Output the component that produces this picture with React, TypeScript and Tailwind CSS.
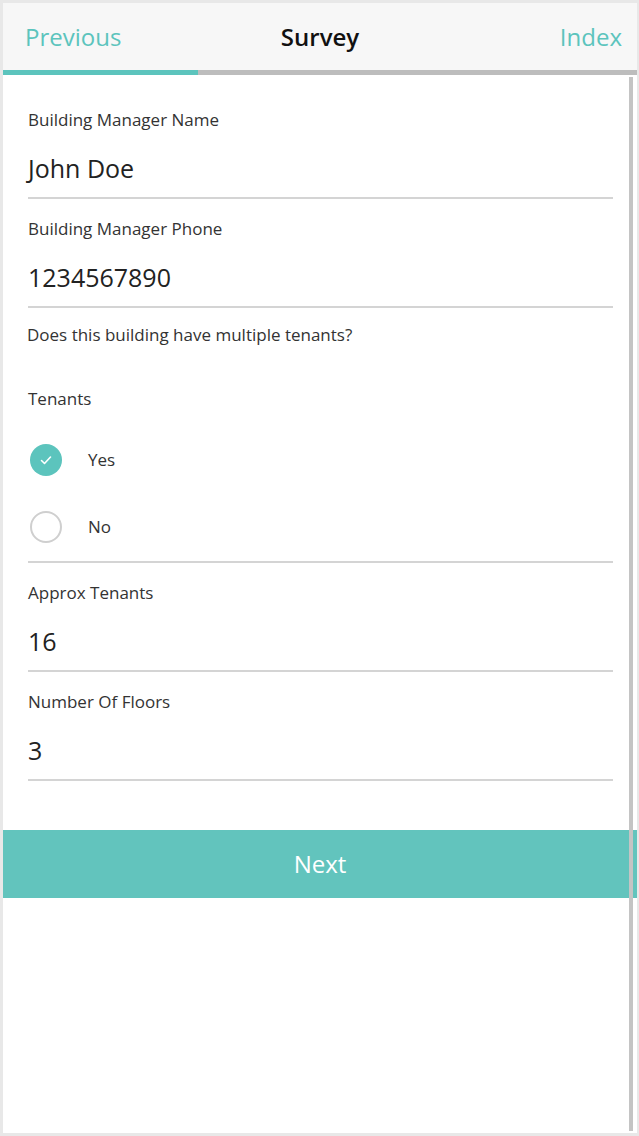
import React from "react";

const font = { fontFamily: "'Open Sans', Lato, sans-serif" };

function Field({ label, value }: { label: string; value: string }) {
  return (
    <div className="flex flex-col border-b-2 border-[#d4d4d4] pt-[18px] pb-[11px]">
      <div className="h-[24px] text-[17px] leading-[24px] text-[#333]">{label}</div>
      <div className="mt-[18px] h-[36px] text-[25px] leading-[36px] text-[#222]">{value}</div>
    </div>
  );
}

function Radio({ checked, label }: { checked?: boolean; label: string }) {
  return (
    <div className="flex items-center pl-[2px]">
      {checked ? (
        <span className="flex h-[32px] w-[32px] items-center justify-center rounded-full bg-[#5cc4bd]">
          <svg width="14" height="14" viewBox="0 0 14 14" fill="none">
            <path d="M2.5 7.5l3 3 6-6.5" stroke="white" strokeWidth="1.6" strokeLinecap="round" strokeLinejoin="round" />
          </svg>
        </span>
      ) : (
        <span className="h-[32px] w-[32px] rounded-full border-2 border-[#cfcfcf]" />
      )}
      <span className="ml-[26px] text-[17px] text-[#333]">{label}</span>
    </div>
  );
}

export default function App() {
  return (
    <div
      style={font}
      className="relative flex h-[1136px] w-[639px] flex-col border-t-[3px] border-r-2 border-b-[3px] border-l-[3px] border-[#e8e8e8] bg-white"
    >
      <header className="grid h-[67px] grid-cols-3 items-center bg-[#f7f7f7] px-[22px]">
        <span className="text-[24px] text-[#5cc4bd]">Previous</span>
        <span className="text-center text-[24px] font-semibold text-[#111]">Survey</span>
        <span className="-mr-[7px] text-right text-[24px] text-[#5cc4bd]">Index</span>
      </header>
      <div className="flex h-[5px]">
        <div className="w-[195px] bg-[#5cc4bd]" />
        <div className="flex-1 bg-[#bdbdbd]" />
      </div>

      <main className="flex flex-col pt-[15px]">
        <div className="flex flex-col px-[25px] pr-[24px]">
          <Field label="Building Manager Name" value="John Doe" />
          <Field label="Building Manager Phone" value="1234567890" />
          <div className="mt-[15px] -ml-px h-[24px] text-[17px] leading-[24px] text-[#333]">
            Does this building have multiple tenants?
          </div>
          <div className="mt-[40px] h-[24px] text-[17px] leading-[24px] text-[#333]">Tenants</div>
          <div className="mt-[33px] flex flex-col gap-[35px] border-b-2 border-[#d4d4d4] pb-[18px]">
            <Radio checked label="Yes" />
            <Radio label="No" />
          </div>
          <Field label="Approx Tenants" value="16" />
          <Field label="Number Of Floors" value="3" />
        </div>

        <button className="mt-[49px] h-[68px] w-full bg-[#62c4bd] text-[24px] text-white">Next</button>
      </main>

      <div className="absolute top-[74px] right-[4px] bottom-[2px] w-[4px] bg-[#c4c4c4]" />
    </div>
  );
}
